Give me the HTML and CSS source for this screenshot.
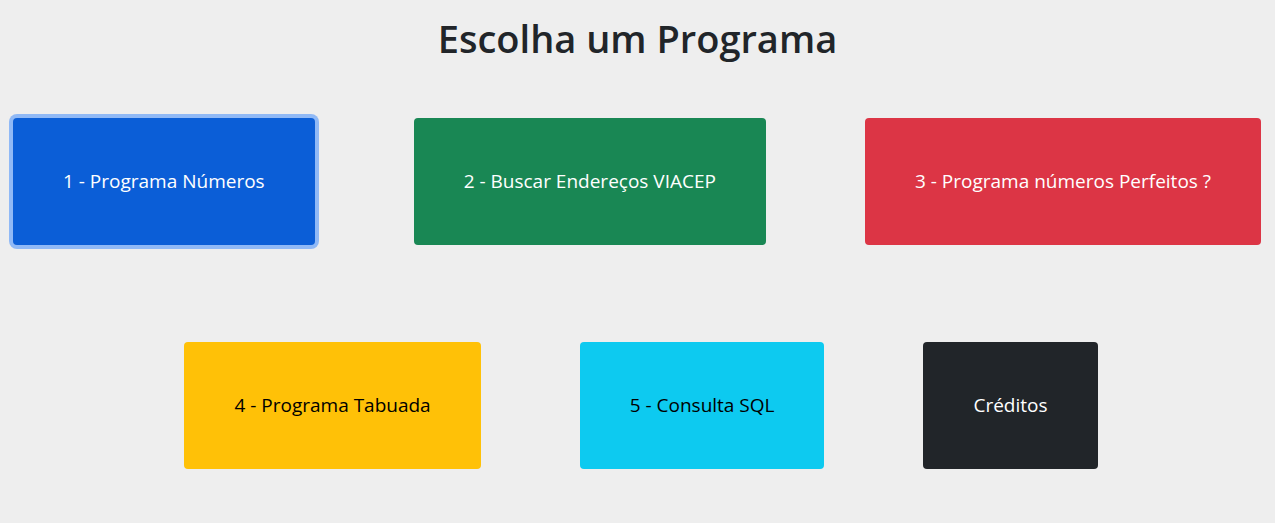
FILE: index.html
```html
<!DOCTYPE html>
<html lang="pt-BR">
<head>
<meta charset="utf-8">
<title>Escolha um Programa</title>
<link rel="stylesheet" href="styles.css">
</head>
<body>
<main class="page">
  <h1 class="title">Escolha um Programa</h1>
  <div class="row row-top">
    <button class="btn btn-primary is-focused">1 - Programa Números</button>
    <button class="btn btn-success">2 - Buscar Endereços VIACEP</button>
    <button class="btn btn-danger">3 - Programa números Perfeitos ?</button>
  </div>
  <div class="row row-bottom">
    <button class="btn btn-warning">4 - Programa Tabuada</button>
    <button class="btn btn-info">5 - Consulta SQL</button>
    <button class="btn btn-dark">Créditos</button>
  </div>
</main>
</body>
</html>
```

FILE: styles.css
```css
html, body {
  margin: 0;
  padding: 0;
}

body {
  background: #eeeeee;
  font-family: "Open Sans", "Noto Sans", sans-serif;
  color: #212529;
}

.page {
  display: flex;
  flex-direction: column;
}

.title {
  margin: 0;
  padding-top: 14px;
  font-size: 38px;
  font-weight: 600;
  line-height: 48px;
  text-align: center;
  color: #212529;
}

.row {
  display: flex;
  gap: 99px;
}

.row-top {
  margin-top: 56px;
  padding-left: 13px;
}

.row-bottom {
  margin-top: 97px;
  justify-content: center;
  padding-left: 7px;
}

.btn {
  font-family: inherit;
  font-size: 19px;
  line-height: 27px;
  padding: 50px 50px;
  border: 0;
  border-radius: 4px;
  cursor: pointer;
  white-space: nowrap;
}

.btn-primary { background: #0b5ed7; color: #ffffff; }
.btn-success { background: #198754; color: #ffffff; }
.btn-danger  { background: #dc3545; color: #ffffff; }
.btn-warning { background: #ffc107; color: #000000; }
.btn-info    { background: #0dcaf0; color: #000000; }
.btn-dark    { background: #212529; color: #ffffff; }

.is-focused {
  box-shadow: 0 0 0 4px rgba(49, 132, 253, 0.5);
}
```
